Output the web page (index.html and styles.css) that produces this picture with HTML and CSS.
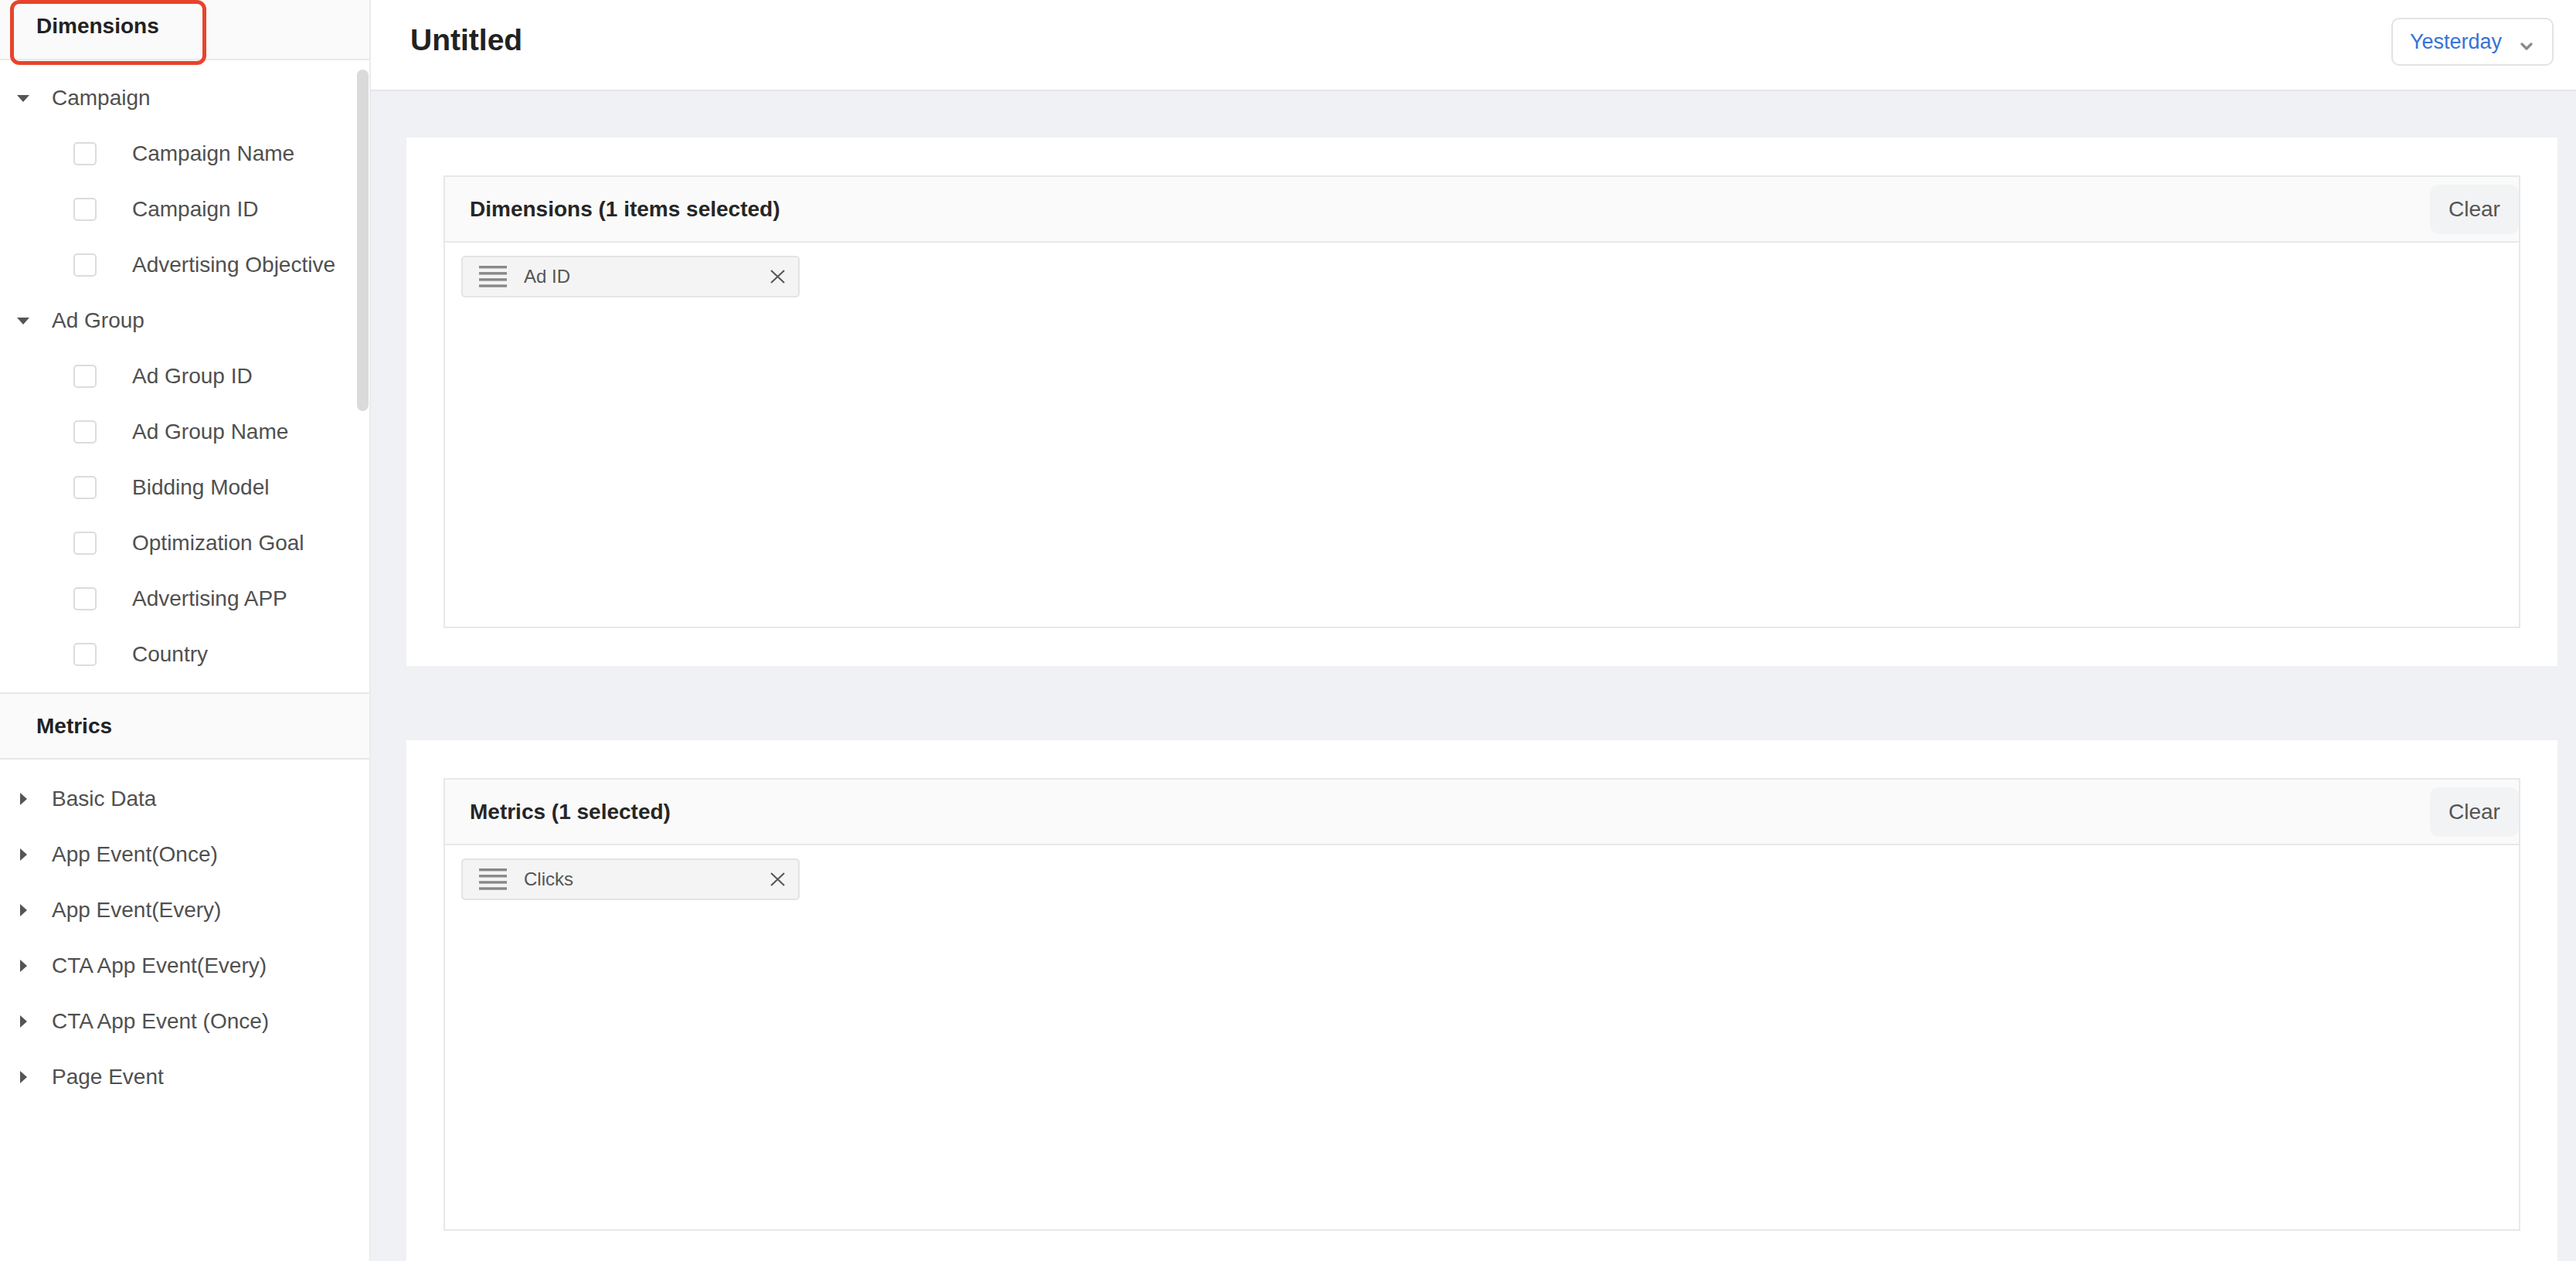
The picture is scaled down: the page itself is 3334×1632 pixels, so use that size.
FILE: index.html
```html
<!DOCTYPE html>
<html lang="en">
<head>
  <meta charset="UTF-8" />
  <meta name="viewport" content="width=device-width, initial-scale=1.0" />
  <title>Custom Report</title>
  <link rel="stylesheet" href="styles.css">
</head>
<body>
  <div class="report-builder">
    <aside class="field-panel">
      <div class="panel-title">Dimensions</div>
      <div class="field-list dims-list">
        <div class="group-row"><span class="caret open"></span>Campaign</div>
        <div class="field-row"><span class="checkbox"></span>Campaign Name</div>
        <div class="field-row"><span class="checkbox"></span>Campaign ID</div>
        <div class="field-row"><span class="checkbox"></span>Advertising Objective</div>
        <div class="group-row"><span class="caret open"></span>Ad Group</div>
        <div class="field-row"><span class="checkbox"></span>Ad Group ID</div>
        <div class="field-row"><span class="checkbox"></span>Ad Group Name</div>
        <div class="field-row"><span class="checkbox"></span>Bidding Model</div>
        <div class="field-row"><span class="checkbox"></span>Optimization Goal</div>
        <div class="field-row"><span class="checkbox"></span>Advertising APP</div>
        <div class="field-row"><span class="checkbox"></span>Country</div>
        <div class="scroll-thumb"></div>
      </div>

      <div class="panel-title metrics-title">Metrics</div>
      <div class="field-list metrics-list">
        <div class="group-row"><span class="caret"></span>Basic Data</div>
        <div class="group-row"><span class="caret"></span>App Event(Once)</div>
        <div class="group-row"><span class="caret"></span>App Event(Every)</div>
        <div class="group-row"><span class="caret"></span>CTA App Event(Every)</div>
        <div class="group-row"><span class="caret"></span>CTA App Event (Once)</div>
        <div class="group-row"><span class="caret"></span>Page Event</div>
      </div>

      <!-- annotation frame around the Dimensions tab -->
      <div class="highlight-box"></div>
    </aside>

    <main class="workspace">
      <header class="top-bar">
        <h1>Untitled</h1>
        <div class="date-select">
          <span>Yesterday</span>
          <svg width="16" height="10" viewBox="0 0 16 10"><polyline points="2,2 8,8 14,2" fill="none" stroke="#8a8a8a" stroke-width="3.2" stroke-linecap="round" stroke-linejoin="round"/></svg>
        </div>
      </header>

      <div class="content">
        <section class="card">
          <div class="selection-box">
            <div class="box-header">
              <h2>Dimensions (1 items selected)</h2>
              <button class="clear-btn">Clear</button>
            </div>
            <div class="box-body">
              <div class="chip">
                <svg class="drag-handle" width="36" height="28" viewBox="0 0 36 28"><rect y="0" width="36" height="3.4" fill="#888"/><rect y="8.1" width="36" height="3.4" fill="#888"/><rect y="16.2" width="36" height="3.4" fill="#888"/><rect y="24.3" width="36" height="3.4" fill="#888"/></svg>
                <span class="chip-label">Ad ID</span>
                <svg class="chip-close" width="19" height="18" viewBox="0 0 19 18"><path d="M1 1 L18 17 M18 1 L1 17" stroke="#555" stroke-width="2" fill="none"/></svg>
              </div>
            </div>
          </div>
        </section>

        <section class="card">
          <div class="selection-box">
            <div class="box-header">
              <h2>Metrics (1 selected)</h2>
              <button class="clear-btn">Clear</button>
            </div>
            <div class="box-body">
              <div class="chip">
                <svg class="drag-handle" width="36" height="28" viewBox="0 0 36 28"><rect y="0" width="36" height="3.4" fill="#888"/><rect y="8.1" width="36" height="3.4" fill="#888"/><rect y="16.2" width="36" height="3.4" fill="#888"/><rect y="24.3" width="36" height="3.4" fill="#888"/></svg>
                <span class="chip-label">Clicks</span>
                <svg class="chip-close" width="19" height="18" viewBox="0 0 19 18"><path d="M1 1 L18 17 M18 1 L1 17" stroke="#555" stroke-width="2" fill="none"/></svg>
              </div>
            </div>
          </div>
        </section>
      </div>
    </main>
  </div>
</body>
</html>
```

FILE: styles.css
```css
* {
  box-sizing: border-box;
}

html, body {
  margin: 0;
  height: 100%;
  overflow: hidden;
}

body {
  font-family: "Liberation Sans", Arial, sans-serif;
  color: #505050;
  background: #f0f1f5;
}

.report-builder {
  display: flex;
  height: 100vh;
}

/* left field picker */
.field-panel {
  position: relative;
  flex: 0 0 480px;
  background: #fff;
  border-right: 2px solid #ebebeb;
}

.panel-title {
  height: 78px;
  padding: 14px 0 0 47px;
  line-height: 40px;
  font-size: 28px;
  font-weight: bold;
  color: #222;
  background: #fafafa;
  border-bottom: 2px solid #e8e8e8;
}

.panel-title.metrics-title {
  height: 87px;
  padding-top: 22px;
  border-top: 2px solid #e8e8e8;
}

.field-list {
  padding-top: 13px;
}

.dims-list {
  position: relative;
  height: 818px;
  overflow: hidden;
}

.metrics-list {
  padding-top: 15px;
}

.group-row,
.field-row {
  display: flex;
  align-items: center;
  height: 72px;
  font-size: 28px;
  white-space: nowrap;
}

.group-row {
  padding-left: 22px;
}

.field-row {
  padding-left: 95px;
}

.caret {
  width: 16px;
  margin-right: 29px;
  display: flex;
  justify-content: center;
}

.caret::before {
  content: "";
  border-top: 8px solid transparent;
  border-bottom: 8px solid transparent;
  border-left: 9px solid #555;
}

.caret.open::before {
  border-left: 8px solid transparent;
  border-right: 8px solid transparent;
  border-top: 9px solid #555;
  border-bottom: 0;
}

.checkbox {
  width: 30px;
  height: 30px;
  margin-right: 46px;
  border: 2px solid #dcdcdc;
  border-radius: 5px;
  background: #fff;
}

.scroll-thumb {
  position: absolute;
  top: 12px;
  right: 1px;
  width: 15px;
  height: 442px;
  border-radius: 8px;
  background: #dadada;
}

.highlight-box {
  position: absolute;
  top: 0;
  left: 13px;
  width: 254px;
  height: 84px;
  border: 5px solid #e8432c;
  border-radius: 12px;
}

/* right side */
.workspace {
  flex: 1;
  display: flex;
  flex-direction: column;
  min-width: 0;
}

.top-bar {
  flex: 0 0 118px;
  display: flex;
  align-items: center;
  justify-content: space-between;
  padding: 0 29px 8px 51px;
  background: #fff;
  border-bottom: 2px solid #e6e6e6;
}

.top-bar h1 {
  margin: 0 0 4px;
  font-size: 39px;
  color: #222;
}

.date-select {
  display: flex;
  align-items: center;
  height: 62px;
  padding: 0 25px 0 22px;
  border: 2px solid #e3e3e3;
  border-radius: 10px;
  font-size: 27px;
  color: #3573d9;
  background: #fff;
}

.date-select svg {
  margin-left: 24px;
  margin-top: 12px;
}

.content {
  flex: 1;
  overflow: hidden;
  display: flex;
  flex-direction: column;
  gap: 96px;
  padding: 60px 24px 0 46px;
}

.card {
  flex: 0 0 auto;
  background: #fff;
  padding: 49px 48px;
}

.selection-box {
  border: 2px solid #e8e8e8;
}

.box-header {
  display: flex;
  align-items: center;
  justify-content: space-between;
  height: 85px;
  padding-left: 32px;
  background: #fafafa;
  border-bottom: 2px solid #e8e8e8;
}

.box-header h2 {
  margin: 0;
  font-size: 28px;
  color: #262626;
}

.clear-btn {
  width: 115px;
  height: 64px;
  border: 0;
  border-radius: 12px;
  background: #f2f3f5;
  font-family: inherit;
  font-size: 28px;
  color: #555;
}

.box-body {
  height: 497px;
  padding: 17px 21px;
}

.chip {
  display: flex;
  align-items: center;
  width: 438px;
  height: 54px;
  padding: 0 17px 0 21px;
  background: #f4f4f4;
  border: 2px solid #e4e4e4;
  border-radius: 5px;
}

.chip-label {
  flex: 1;
  margin-left: 22px;
  font-size: 24px;
  color: #555;
}
```
